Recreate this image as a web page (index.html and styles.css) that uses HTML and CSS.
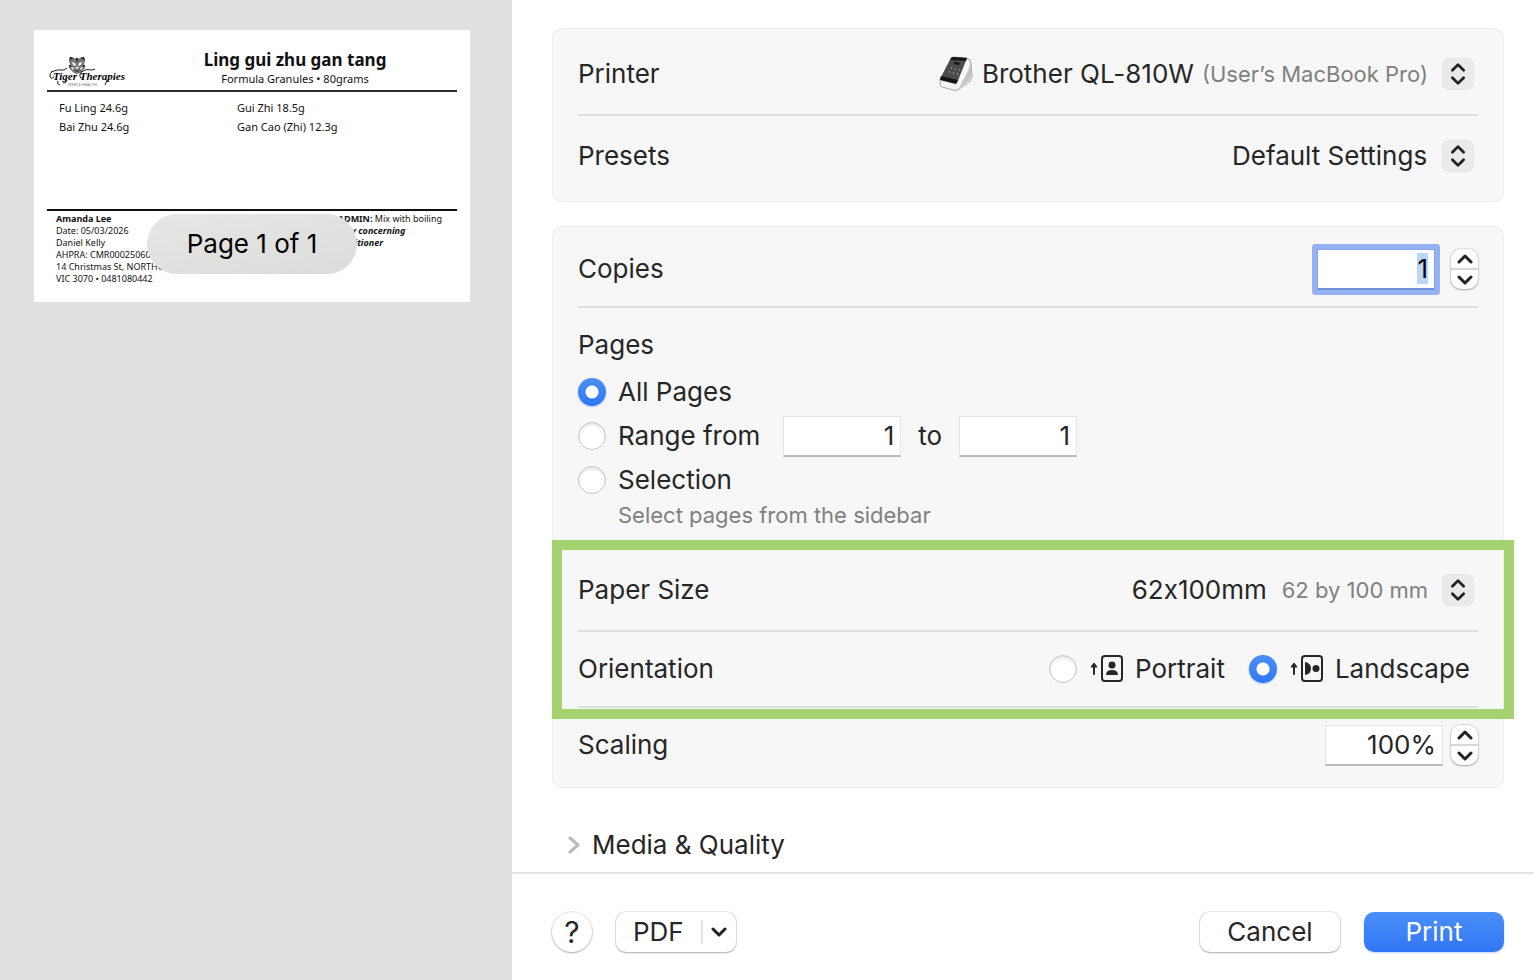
FILE: index.html
```html
<!DOCTYPE html>
<html lang="en">
<head>
    <meta charset="UTF-8">
    <meta name="viewport" content="width=device-width, initial-scale=1.0">
    <title>Print</title>
    <link rel="stylesheet" href="styles.css">
</head>
<body>
    <aside class="sidebar">
        <div class="paper">
            <div class="paper-header">
                <svg class="logo" width="78" height="36" viewBox="0 0 78 36" role="img" aria-label="Tiger Therapies">
                    <path d="M20 5l1-4 4 1 3 1 3-1 4-1 1 4-1 3 1 4-3 3-2 2-3 1-3-1-2-2-3-3 1-4z" fill="#777"/>
                    <path d="M23 6l3 1 1 3-3-1zM33 6l-3 1-1 3 3-1zM26 11h4l-2 2zM22 11l3 1-1 2zM34 11l-3 1 1 2z" fill="#fff"/>
                    <path d="M20 5l1-4 4 1-3 1zM36 5l-1-4-4 1 3 1zM27 2h2l-1 5zM25 14l3 1 3-1-3 2zM20 9l3 1-3 1zM36 9l-3 1 3 1z" fill="#111"/>
                    <path d="M4 15q-4 2-3 6 1 3 4 0M2 16q6-3 13-2l3-2M33 15q-3 3-2 6 1 2 3 0M32 16q5-4 11-2l3-1M9 25q-2 3 2 4M18 24q-1 4-4 3M58 24l-2 5" fill="none" stroke="#222" stroke-width="1"/>
                    <text x="4" y="24" class="logo-name">Tiger Therapies</text>
                    <text x="19" y="30" class="logo-tag">FIERCE HEALTH</text>
                </svg>
                <div class="paper-heading">
                    <div class="paper-title">Ling gui zhu gan tang</div>
                    <div class="paper-subtitle">Formula Granules • 80grams</div>
                </div>
            </div>
            <div class="paper-body">
                <span>Fu Ling 24.6g</span>
                <span>Gui Zhi 18.5g</span>
                <span>Bai Zhu 24.6g</span>
                <span>Gan Cao (Zhi) 12.3g</span>
            </div>
            <div class="paper-footer">
                <div class="patient">
                    <b>Amanda Lee</b><br>
                    Date: 05/03/2026<br>
                    Daniel Kelly<br>
                    AHPRA: CMR000250601<br>
                    14 Christmas St, NORTHCOTE<br>
                    VIC 3070 • 0481080442
                </div>
                <div class="directions">
                    <b>• ADMIN:</b> Mix with boiling<br>
                    <b><i>if any concerning</i></b><br>
                    <b><i>practitioner</i></b>
                </div>
            </div>
            <div class="page-badge">Page 1 of 1</div>
        </div>
    </aside>

    <form class="dialog">
        <div class="settings">
            <section class="card">
                <div class="row">
                    <label for="printer">Printer</label>
                    <div class="popup">
                        <svg class="printer-icon" width="36" height="36" viewBox="0 0 36 36" aria-hidden="true">
                            <path d="M2 24L12 4q1-3 4-3l13 1q4 1 4 5l1 13q0 3-2 5L20 34q-2 1-5 0L4 31q-2-1-2-3z" fill="#ececec" stroke="#aaa"/>
                            <path d="M29 3q4 1 4 6v9q0 4-2 6L20 33l1-9z" fill="#c4c4c4"/>
                            <path d="M29 3l-9 20-2 10 3-1 8-15q4-8 2-13z" fill="#f8f8f8"/>
                            <path d="M2 23L12 4q1-3 4-3l13 1-10 25q-9-1-17-4z" fill="#4c4c4c"/>
                            <path d="M14 1l15 1-1 3-16-1zM3 20l17 4-2 4-16-4z" fill="#151515"/>
                            <path d="M16 6l6 1-1 2-5-1z" fill="#111"/>
                            <path d="M13 12l1 0M17 13l1 0M21 14l1 0M11 16l1 0M15 17l1 0M19 18l1 0" stroke="#ccc" stroke-width="1"/>
                            <path d="M3 26l14 3v4L4 30z" fill="#f6f6f6"/>
                        </svg>
                        <select id="printer"><option>Brother QL-810W</option></select>
                        <span class="note">(User’s MacBook Pro)</span>
                        <svg class="arrows" viewBox="0 0 32 32" aria-hidden="true"><path d="M10 12l6-6 6 6M10 20l6 6 6-6"/></svg>
                    </div>
                </div>
                <div class="row">
                    <label for="presets">Presets</label>
                    <div class="popup">
                        <select id="presets"><option>Default Settings</option></select>
                        <svg class="arrows" viewBox="0 0 32 32" aria-hidden="true"><path d="M10 12l6-6 6 6M10 20l6 6 6-6"/></svg>
                    </div>
                </div>
            </section>

            <section class="card">
                <div class="row row-short">
                    <label for="copies">Copies</label>
                    <div class="number number-focused">
                        <input class="field" id="copies" type="text" value="1">
                        <div class="stepper">
                            <button type="button" aria-label="More copies"><svg viewBox="0 0 16 10"><path d="M2 8l6-6 6 6"/></svg></button>
                            <button type="button" aria-label="Fewer copies"><svg viewBox="0 0 16 10"><path d="M2 2l6 6 6-6"/></svg></button>
                        </div>
                    </div>
                </div>
                <div class="pages" role="radiogroup" aria-labelledby="pages-title">
                    <div class="pages-title" id="pages-title">Pages</div>
                    <label class="choice"><input type="radio" name="pages" checked>All Pages</label>
                    <div class="range">
                        <label class="choice"><input type="radio" name="pages">Range from</label>
                        <input class="field" type="text" value="1" aria-label="First page">
                        <label for="last-page">to</label>
                        <input class="field" id="last-page" type="text" value="1">
                    </div>
                    <label class="choice"><input type="radio" name="pages">Selection</label>
                    <div class="note pages-note">Select pages from the sidebar</div>
                </div>
                <div class="highlight">
                    <div class="row">
                        <label for="paper-size">Paper Size</label>
                        <div class="popup popup-wide">
                            <select id="paper-size"><option>62x100mm</option></select>
                            <span class="note">62 by 100 mm</span>
                            <svg class="arrows" viewBox="0 0 32 32" aria-hidden="true"><path d="M10 12l6-6 6 6M10 20l6 6 6-6"/></svg>
                        </div>
                    </div>
                    <div class="row row-short">
                        <span id="orientation">Orientation</span>
                        <div class="orientation" role="radiogroup" aria-labelledby="orientation">
                            <label class="choice">
                                <input type="radio" name="orientation">
                                <svg width="34" height="28" viewBox="0 0 34 28" aria-hidden="true">
                                    <path d="M5 19V12" stroke="#262626" stroke-width="2" stroke-linecap="round"/>
                                    <path d="M5 8l3 4H2z" fill="#262626" stroke="#262626" stroke-linejoin="round"/>
                                    <rect x="13" y="1" width="20" height="25" rx="3" fill="none" stroke="#262626" stroke-width="2"/>
                                    <circle cx="23" cy="10" r="3.5" fill="#262626"/>
                                    <path d="M17 20q0-5 6-5t6 5z" fill="#262626"/>
                                </svg>
                                Portrait
                            </label>
                            <label class="choice">
                                <input type="radio" name="orientation" checked>
                                <svg width="34" height="28" viewBox="0 0 34 28" aria-hidden="true">
                                    <path d="M5 19V12" stroke="#262626" stroke-width="2" stroke-linecap="round"/>
                                    <path d="M5 8l3 4H2z" fill="#262626" stroke="#262626" stroke-linejoin="round"/>
                                    <rect x="13" y="1" width="20" height="25" rx="3" fill="none" stroke="#262626" stroke-width="2"/>
                                    <circle cx="27" cy="13.5" r="3.5" fill="#262626"/>
                                    <path d="M16 7q6 1 6 6.500t-6 6.500z" fill="#262626"/>
                                </svg>
                                Landscape
                            </label>
                        </div>
                    </div>
                </div>
                <div class="row row-short">
                    <label for="scaling">Scaling</label>
                    <div class="number">
                        <input class="field" id="scaling" type="text" value="100%">
                        <div class="stepper">
                            <button type="button" aria-label="Larger"><svg viewBox="0 0 16 10"><path d="M2 8l6-6 6 6"/></svg></button>
                            <button type="button" aria-label="Smaller"><svg viewBox="0 0 16 10"><path d="M2 2l6 6 6-6"/></svg></button>
                        </div>
                    </div>
                </div>
            </section>

            <button type="button" class="disclosure">
                <svg width="12" height="18" viewBox="0 0 12 18" aria-hidden="true"><path d="M2 2l8 7-8 7"/></svg>
                Media &amp; Quality
            </button>
        </div>

        <footer class="actions">
            <button type="button" class="btn help" aria-label="Help">?</button>
            <div class="btn pdf">
                <button type="button">PDF</button>
                <button type="button" class="pdf-menu" aria-label="PDF options"><svg viewBox="0 0 16 10"><path d="M2 2l6 6 6-6"/></svg></button>
            </div>
            <button type="button" class="btn cancel">Cancel</button>
            <button type="submit" class="btn print">Print</button>
        </footer>
    </form>
    <script>
        document.getElementById('copies').select();
    </script>
</body>
</html>
```
FILE: styles.css
```css
* {
    box-sizing: border-box;
}
body {
    margin: 0;
    height: 100vh;
    display: flex;
    background-color: #fff;
    color: #262626;
    font-family: Inter, "Liberation Sans", sans-serif;
    font-size: 26px;
    line-height: 32px;
}
button, input, select {
    margin: 0;
    padding: 0;
    border: 0;
    background: none;
    color: inherit;
    font: inherit;
}
svg {
    flex: none;
}

/* preview */
.sidebar {
    flex: 0 0 512px;
    padding: 30px 42px 30px 34px;
    background-color: #e0e0de;
}
.paper {
    position: relative;
    height: 272px;
    padding: 20px 13px 0;
    background-color: #fff;
    color: #111;
    font-family: "Noto Sans", sans-serif;
    overflow: hidden;
}
.paper-header {
    display: flex;
    height: 42px;
    padding-left: 2px;
    border-bottom: 2px solid #2b2b2b;
}
.logo {
    margin-top: 6px;
}
.logo-name {
    font: italic bold 11px "Liberation Serif", serif;
}
.logo-tag {
    font: 4px "Noto Sans", sans-serif;
    fill: #777;
}
.paper-heading {
    flex: 1;
    padding-left: 6px;
    text-align: center;
}
.paper-title {
    font-size: 17px;
    font-weight: bold;
    line-height: 20px;
}
.paper-subtitle {
    font-size: 11px;
    line-height: 18px;
}
.paper-body {
    display: grid;
    grid-template-columns: 178px 1fr;
    grid-auto-rows: 19px;
    height: 119px;
    padding: 6px 12px 0;
    font-size: 11px;
    line-height: 19px;
    border-bottom: 2px solid #111;
    align-content: start;
}
.paper-footer {
    display: flex;
    justify-content: space-between;
    padding: 2px 15px 0 9px;
    font-size: 9px;
    line-height: 12px;
    white-space: nowrap;
}
.page-badge {
    position: absolute;
    left: 50%;
    bottom: 28px;
    width: 210px;
    transform: translateX(-50%);
    border-radius: 30px;
    background: linear-gradient(170deg, #e6e6e5, #dcdcdb);
    color: #000;
    font-family: Inter, sans-serif;
    font-size: 26px;
    line-height: 60px;
    text-align: center;
}

/* settings */
.dialog {
    flex: 1;
    min-width: 0;
    display: flex;
    flex-direction: column;
}
.settings {
    flex: 1;
    min-height: 0;
    overflow: hidden;
    padding: 28px 30px 0 40px;
}
.card {
    margin-bottom: 24px;
    padding: 5px 25px;
    border: 1px solid #ececec;
    border-radius: 10px;
    background-color: #f7f7f7;
}
.row {
    display: flex;
    align-items: center;
    justify-content: space-between;
    height: 82px;
    border-bottom: 2px solid #dedede;
}
.row-short {
    height: 76px;
}
.card > .row:last-child {
    border-bottom: 0;
    height: 80px;
}
.card > .row-short:last-child {
    height: 74px;
}
.popup {
    display: flex;
    align-items: center;
    gap: 8px;
    padding-right: 4px;
}
.popup-wide {
    gap: 14px;
}
.popup select {
    appearance: none;
    outline: none;
    height: 32px;
    /* keeps the x in 62x100mm a letter */
    font-feature-settings: "calt" 0;
}
.note {
    color: #808080;
    font-size: 22px;
}
.arrows {
    width: 32px;
    height: 32px;
    margin-left: 6px;
    border: 1px solid #e4e4e4;
    border-radius: 7px;
    background-color: #eaeaea;
}
.popup-wide .arrows {
    margin-left: 0;
}
.arrows path, .stepper path, .pdf path {
    fill: none;
    stroke: #222;
    stroke-width: 3;
    stroke-linecap: round;
    stroke-linejoin: round;
}
.field {
    width: 118px;
    height: 41px;
    padding: 0 6px;
    border: 1px solid #e3e3e3;
    border-bottom: 2px solid #bbb;
    background-color: #fff;
    text-align: right;
    outline: none;
}
.number {
    display: flex;
    align-items: center;
    gap: 8px;
}
.number-focused {
    gap: 16px;
}
#copies:focus {
    border: 1px solid #86a5ee;
    border-bottom: 2px solid #6d8fdc;
    box-shadow: 0 0 0 5px #94b1f4;
    border-radius: 1px;
}
#copies::selection {
    background-color: #bad6fb;
    color: #000;
}
.stepper {
    display: flex;
    flex-direction: column;
    width: 27px;
    height: 40px;
    border-radius: 10px;
    background-color: #fff;
    box-shadow: 0 0 1px 1px #00000018, 0 1px 2px #00000040;
}
.stepper button {
    flex: 1;
    display: flex;
    align-items: center;
    justify-content: center;
}
.stepper button + button {
    border-top: 2px solid #d8d8d8;
}
.stepper svg, .pdf svg {
    width: 16px;
    height: 10px;
}
.pages {
    padding: 20px 0 22px;
}
.pages-title {
    margin-bottom: 8px;
    line-height: 34px;
}
.choice {
    display: flex;
    align-items: center;
    gap: 12px;
    height: 44px;
}
.choice input {
    appearance: none;
    width: 28px;
    height: 28px;
    border: 1px solid #c6c6c6;
    border-radius: 50%;
    background-color: #fff;
    box-shadow: inset 0 2px 3px #0000001c;
}
.choice input:checked {
    border: 0;
    background: radial-gradient(circle, #fff 6px, transparent 7px), linear-gradient(#4a8ff7, #3176f6);
    box-shadow: 0 1px 2px #3176f655;
}
.range {
    display: flex;
    align-items: center;
    gap: 17px;
}
.range .choice {
    margin-right: 6px;
}
.pages-note {
    padding-left: 40px;
    line-height: 26px;
}
.highlight {
    position: relative;
}
/* green frame round paper size and orientation */
.highlight::after {
    content: "";
    position: absolute;
    inset: -10px -36px -11px -26px;
    border: 10px solid #a4d26f;
    pointer-events: none;
}
.orientation {
    display: flex;
    gap: 24px;
    padding-right: 8px;
}
.disclosure {
    display: flex;
    align-items: center;
    gap: 12px;
    height: 60px;
    padding: 6px 0 0 16px;
}
.disclosure path {
    fill: none;
    stroke: #bababa;
    stroke-width: 3;
    stroke-linecap: round;
    stroke-linejoin: round;
}

/* bottom buttons */
.actions {
    flex: 0 0 108px;
    display: flex;
    align-items: center;
    gap: 24px;
    padding: 10px 30px 0 40px;
    border-top: 2px solid #e5e5e5;
}
.btn {
    height: 40px;
    border-radius: 10px;
    background-color: #fff;
    box-shadow: 0 0 1px 1px #00000018, 0 1px 2px #00000040;
}
.help {
    width: 40px;
    border-radius: 50%;
    font-size: 30px;
}
.pdf {
    display: flex;
    align-items: center;
    width: 120px;
    padding-left: 17px;
}
.pdf-menu {
    flex: 1;
    display: flex;
    justify-content: center;
    align-items: center;
    height: 24px;
    margin-left: 17px;
    border-left: 2px solid #e3e3e3;
}
.cancel {
    width: 140px;
    margin-left: auto;
}
.print {
    width: 140px;
    background: linear-gradient(#4a8ff7, #3176f6);
    box-shadow: 0 1px 2px #3176f655;
    color: #fff;
}
```
